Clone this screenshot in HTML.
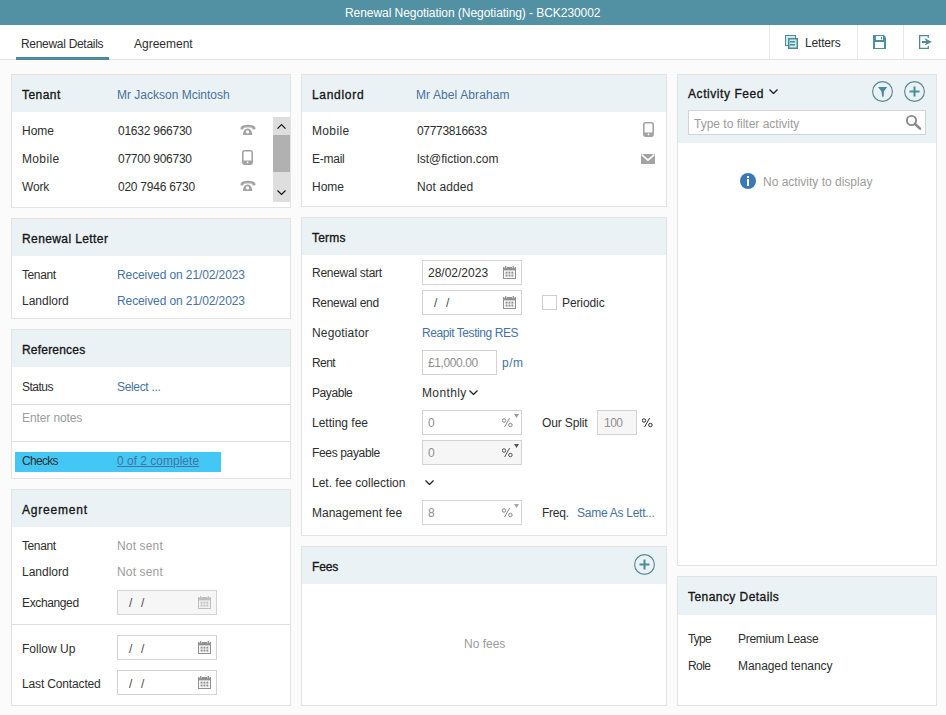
<!DOCTYPE html>
<html><head><meta charset="utf-8">
<style>
*{box-sizing:border-box;margin:0;padding:0}
html,body{width:946px;height:715px;overflow:hidden;background:#fbfbfb;font-family:"Liberation Sans",sans-serif;font-size:12px;color:#2e2e2e}
.a{position:absolute;display:block}
.t{position:absolute;white-space:nowrap;line-height:14px;font-size:12px}
.b{color:#161616;-webkit-text-stroke:0.32px #161616}
.lk{color:#4673a0}
.g{color:#9c9c9c}
.ig{color:#8f8f8f}
.p{position:absolute;background:#fff;border:1px solid #e1e3e4}
.h{position:absolute;left:0;top:0;right:0;background:#ebf2f5}
.inp{position:absolute;border:1px solid #d3d3d3;background:#fff}
.dis{background:#f6f6f6}
</style></head><body>
<div class="a" style="left:0px;top:0px;width:946px;height:25px;background:#5291a3"></div>
<div class="t " style="left:345px;top:6px;letter-spacing:-0.06px;color:#fff">Renewal Negotiation (Negotiating) - BCK230002</div>
<div class="a" style="left:0px;top:25px;width:946px;height:35px;background:#fff;border-bottom:1px solid #e3e3e3"></div>
<div class="t " style="left:21px;top:37px;letter-spacing:-0.3px;">Renewal Details</div>
<div class="t " style="left:134px;top:37px;">Agreement</div>
<div class="a" style="left:16px;top:57px;width:93px;height:3px;background:#4f8a9a"></div>
<div class="a" style="left:769px;top:25px;width:1px;height:34px;background:#e8e8e8"></div>
<div class="a" style="left:857px;top:25px;width:1px;height:34px;background:#e8e8e8"></div>
<div class="a" style="left:903px;top:25px;width:1px;height:34px;background:#e8e8e8"></div>
<div class="t " style="left:805px;top:36px;letter-spacing:-0.17px;">Letters</div>
<svg class="a" style="left:780px;top:30px" width="24" height="24" viewBox="0 0 24 24"><rect x="5.5" y="5.5" width="10" height="10" fill="#c9eef5" stroke="#508993"/><rect x="8.75" y="8.75" width="8.5" height="9.5" fill="#c9eef5" stroke="#508993" stroke-width="1.5"/><rect x="10" y="11" width="5" height="1.5" fill="#508993"/><rect x="10" y="14" width="5" height="1.5" fill="#508993"/></svg>
<svg class="a" style="left:868px;top:30px" width="24" height="24" viewBox="0 0 24 24"><path d="M5,5 L16,5 L18,7.5 L18,19 L5,19 Z" fill="#4f8d98"/><rect x="8" y="6" width="7" height="4" fill="#f4fdff"/><rect x="13" y="6.8" width="1" height="2.4" fill="#4f8d98"/><rect x="7" y="12" width="9" height="6" fill="#f4fdff"/></svg>
<svg class="a" style="left:914px;top:30px" width="24" height="24" viewBox="0 0 24 24"><path d="M14.3,7.8 L14.3,5.6 L5.6,5.6 L5.6,18.4 L14.3,18.4 L14.3,16" fill="none" stroke="#508993" stroke-width="1.3"/><rect x="8" y="11" width="5" height="2" fill="#4f8d98"/><path d="M10.5,8 L18,11.9 L10.5,15.6 L12.6,11.9 Z" fill="#4f8d98"/></svg>
<div class="p" style="left:11px;top:74px;width:280px;height:134px"><div class="h" style="height:37px"></div></div>
<div class="t b" style="left:22px;top:88px;letter-spacing:0.45px;">Tenant</div>
<div class="t lk" style="left:117px;top:88px;">Mr Jackson Mcintosh</div>
<div class="t " style="left:22px;top:124px;">Home</div>
<div class="t " style="left:118px;top:124px;letter-spacing:-0.25px;">01632 966730</div>
<div class="t " style="left:22px;top:152px;letter-spacing:0.35px;">Mobile</div>
<div class="t " style="left:118px;top:152px;letter-spacing:-0.25px;">07700 906730</div>
<div class="t " style="left:22px;top:180px;letter-spacing:-0.2px;">Work</div>
<div class="t " style="left:118px;top:180px;letter-spacing:-0.25px;">020 7946 6730</div>
<svg class="a" style="left:240px;top:124px" width="16" height="11" viewBox="0 0 16 11"><path d="M0.6,5.2 C0.2,3.6 1.2,2.2 3,1.6 C6.2,0.5 9.8,0.5 13,1.6 C14.8,2.2 15.8,3.6 15.4,5.2 L12.6,5.4 L12.2,3.8 C9.6,3.1 6.4,3.1 3.8,3.8 L3.4,5.4 Z" fill="#a3a3a3"/><path d="M3,11 C3,7.4 5,4.6 7.6,4.6 C10.2,4.6 12.2,7.4 12.2,11 Z" fill="#a3a3a3"/><circle cx="7.6" cy="7.9" r="1.6" fill="#fff"/></svg>
<svg class="a" style="left:240px;top:180px" width="16" height="11" viewBox="0 0 16 11"><path d="M0.6,5.2 C0.2,3.6 1.2,2.2 3,1.6 C6.2,0.5 9.8,0.5 13,1.6 C14.8,2.2 15.8,3.6 15.4,5.2 L12.6,5.4 L12.2,3.8 C9.6,3.1 6.4,3.1 3.8,3.8 L3.4,5.4 Z" fill="#a3a3a3"/><path d="M3,11 C3,7.4 5,4.6 7.6,4.6 C10.2,4.6 12.2,7.4 12.2,11 Z" fill="#a3a3a3"/><circle cx="7.6" cy="7.9" r="1.6" fill="#fff"/></svg>
<svg class="a" style="left:242px;top:150px" width="11" height="15" viewBox="0 0 11 15"><rect x="0.8" y="0.8" width="9.4" height="13.4" rx="1.6" fill="none" stroke="#a3a3a3" stroke-width="1.6"/><rect x="1" y="10.5" width="9" height="3.5" fill="#a3a3a3"/><circle cx="5.5" cy="12.3" r="0.9" fill="#fff"/></svg>
<div class="a" style="left:273px;top:117px;width:17px;height:85px;background:#dedede"></div>
<div class="a" style="left:273px;top:135px;width:17px;height:37px;background:#b1b1b1"></div>
<svg class="a" style="left:277px;top:124px" width="9" height="5" viewBox="0 0 9 5"><path d="M0.5,4.7 L4.5,0.6 L8.5,4.7" fill="none" stroke="#111" stroke-width="1.1"/></svg>
<svg class="a" style="left:277px;top:190px" width="9" height="5" viewBox="0 0 9 5"><path d="M0.5,0.5 L4.5,4.5 L8.5,0.5" fill="none" stroke="#111" stroke-width="1.1"/></svg>
<div class="p" style="left:11px;top:218px;width:280px;height:101px"><div class="h" style="height:37px"></div></div>
<div class="t b" style="left:22px;top:232px;letter-spacing:0.4px;">Renewal Letter</div>
<div class="t " style="left:22px;top:268px;letter-spacing:-0.4px;">Tenant</div>
<div class="t lk" style="left:117px;top:268px;letter-spacing:-0.1px;">Received on 21/02/2023</div>
<div class="t " style="left:22px;top:294px;">Landlord</div>
<div class="t lk" style="left:117px;top:294px;letter-spacing:-0.1px;">Received on 21/02/2023</div>
<div class="p" style="left:11px;top:329px;width:280px;height:150px"><div class="h" style="height:37px"></div></div>
<div class="t b" style="left:22px;top:343px;letter-spacing:0.2px;">References</div>
<div class="t " style="left:22px;top:380px;letter-spacing:-0.5px;">Status</div>
<div class="t lk" style="left:117px;top:380px;letter-spacing:-0.33px;">Select ...</div>
<div class="a" style="left:12px;top:404px;width:278px;height:1px;background:#dedede"></div>
<div class="t g" style="left:22px;top:411px;letter-spacing:-0.1px;">Enter notes</div>
<div class="a" style="left:12px;top:441px;width:278px;height:1px;background:#dedede"></div>
<div class="a" style="left:15px;top:452px;width:206px;height:20px;background:#43c7f5"></div>
<div class="t " style="left:22px;top:454px;letter-spacing:-0.7px;">Checks</div>
<div class="t lk" style="left:117px;top:454px;text-decoration:underline">0 of 2 complete</div>
<div class="p" style="left:11px;top:489px;width:280px;height:217px"><div class="h" style="height:37px"></div></div>
<div class="t b" style="left:22px;top:503px;letter-spacing:0.8px;">Agreement</div>
<div class="t " style="left:22px;top:539px;letter-spacing:-0.4px;">Tenant</div>
<div class="t g" style="left:117px;top:539px;letter-spacing:0.15px;">Not sent</div>
<div class="t " style="left:22px;top:565px;">Landlord</div>
<div class="t g" style="left:117px;top:565px;letter-spacing:0.15px;">Not sent</div>
<div class="inp dis" style="left:117px;top:590px;width:100px;height:25px"></div>
<div class="t " style="left:22px;top:596px;letter-spacing:-0.37px;">Exchanged</div>
<div class="t " style="left:129px;top:596px;color:#4a4a4a">/</div>
<div class="t " style="left:141px;top:596px;color:#4a4a4a">/</div>
<svg class="a" style="left:198px;top:596px" width="13" height="13" viewBox="0 0 13 13"><rect x="0.5" y="1.5" width="12" height="11" fill="none" stroke="#bdbdbd"/><rect x="0" y="1" width="13" height="3.4" fill="#bdbdbd"/><rect x="1.4" y="0" width="2.6" height="2.2" fill="#f6f6f6"/><rect x="9" y="0" width="2.6" height="2.2" fill="#f6f6f6"/><rect x="2.1" y="0" width="1.3" height="3" fill="#bdbdbd"/><rect x="9.6" y="0" width="1.3" height="3" fill="#bdbdbd"/><path d="M1,7.2 H12 M1,10 H12 M4.2,5 V12 M7,5 V12 M9.8,5 V12" stroke="#bdbdbd" stroke-width="0.6" opacity="0.35"/><rect x="2.6" y="5.7" width="1.8" height="1.8" fill="#bdbdbd"/><rect x="2.6" y="8.6" width="1.8" height="1.8" fill="#bdbdbd"/><rect x="5.5" y="5.7" width="1.8" height="1.8" fill="#bdbdbd"/><rect x="5.5" y="8.6" width="1.8" height="1.8" fill="#bdbdbd"/><rect x="8.4" y="5.7" width="1.8" height="1.8" fill="#bdbdbd"/><rect x="8.4" y="8.6" width="1.8" height="1.8" fill="#bdbdbd"/></svg>
<div class="a" style="left:12px;top:624px;width:278px;height:1px;background:#dedede"></div>
<div class="inp" style="left:117px;top:635px;width:100px;height:25px"></div>
<div class="t " style="left:22px;top:642px;">Follow Up</div>
<div class="t " style="left:129px;top:642px;color:#4a4a4a">/</div>
<div class="t " style="left:141px;top:642px;color:#4a4a4a">/</div>
<svg class="a" style="left:198px;top:641px" width="13" height="13" viewBox="0 0 13 13"><rect x="0.5" y="1.5" width="12" height="11" fill="none" stroke="#909090"/><rect x="0" y="1" width="13" height="3.4" fill="#909090"/><rect x="1.4" y="0" width="2.6" height="2.2" fill="#fff"/><rect x="9" y="0" width="2.6" height="2.2" fill="#fff"/><rect x="2.1" y="0" width="1.3" height="3" fill="#909090"/><rect x="9.6" y="0" width="1.3" height="3" fill="#909090"/><path d="M1,7.2 H12 M1,10 H12 M4.2,5 V12 M7,5 V12 M9.8,5 V12" stroke="#909090" stroke-width="0.6" opacity="0.35"/><rect x="2.6" y="5.7" width="1.8" height="1.8" fill="#909090"/><rect x="2.6" y="8.6" width="1.8" height="1.8" fill="#909090"/><rect x="5.5" y="5.7" width="1.8" height="1.8" fill="#909090"/><rect x="5.5" y="8.6" width="1.8" height="1.8" fill="#909090"/><rect x="8.4" y="5.7" width="1.8" height="1.8" fill="#909090"/><rect x="8.4" y="8.6" width="1.8" height="1.8" fill="#909090"/></svg>
<div class="inp" style="left:117px;top:670px;width:100px;height:25px"></div>
<div class="t " style="left:22px;top:677px;letter-spacing:-0.15px;">Last Contacted</div>
<div class="t " style="left:129px;top:677px;color:#4a4a4a">/</div>
<div class="t " style="left:141px;top:677px;color:#4a4a4a">/</div>
<svg class="a" style="left:198px;top:676px" width="13" height="13" viewBox="0 0 13 13"><rect x="0.5" y="1.5" width="12" height="11" fill="none" stroke="#909090"/><rect x="0" y="1" width="13" height="3.4" fill="#909090"/><rect x="1.4" y="0" width="2.6" height="2.2" fill="#fff"/><rect x="9" y="0" width="2.6" height="2.2" fill="#fff"/><rect x="2.1" y="0" width="1.3" height="3" fill="#909090"/><rect x="9.6" y="0" width="1.3" height="3" fill="#909090"/><path d="M1,7.2 H12 M1,10 H12 M4.2,5 V12 M7,5 V12 M9.8,5 V12" stroke="#909090" stroke-width="0.6" opacity="0.35"/><rect x="2.6" y="5.7" width="1.8" height="1.8" fill="#909090"/><rect x="2.6" y="8.6" width="1.8" height="1.8" fill="#909090"/><rect x="5.5" y="5.7" width="1.8" height="1.8" fill="#909090"/><rect x="5.5" y="8.6" width="1.8" height="1.8" fill="#909090"/><rect x="8.4" y="5.7" width="1.8" height="1.8" fill="#909090"/><rect x="8.4" y="8.6" width="1.8" height="1.8" fill="#909090"/></svg>
<div class="p" style="left:301px;top:74px;width:366px;height:133px"><div class="h" style="height:37px"></div></div>
<div class="t b" style="left:312px;top:88px;letter-spacing:0.7px;">Landlord</div>
<div class="t lk" style="left:416px;top:88px;letter-spacing:0.1px;">Mr Abel Abraham</div>
<div class="t " style="left:312px;top:124px;letter-spacing:0.35px;">Mobile</div>
<div class="t " style="left:417px;top:124px;letter-spacing:-0.33px;">07773816633</div>
<div class="t " style="left:312px;top:152px;letter-spacing:-0.25px;">E-mail</div>
<div class="t " style="left:417px;top:152px;">lst@fiction.com</div>
<div class="t " style="left:312px;top:180px;">Home</div>
<div class="t " style="left:417px;top:180px;letter-spacing:0.1px;">Not added</div>
<svg class="a" style="left:643px;top:122px" width="11" height="15" viewBox="0 0 11 15"><rect x="0.8" y="0.8" width="9.4" height="13.4" rx="1.6" fill="none" stroke="#a3a3a3" stroke-width="1.6"/><rect x="1" y="10.5" width="9" height="3.5" fill="#a3a3a3"/><circle cx="5.5" cy="12.3" r="0.9" fill="#fff"/></svg>
<svg class="a" style="left:641px;top:154px" width="14" height="10" viewBox="0 0 14 10"><rect x="0" y="0" width="14" height="10" fill="#a3a3a3"/><path d="M0.6,0.6 L7,6.2 L13.4,0.6" fill="none" stroke="#fff" stroke-width="1.6"/></svg>
<div class="p" style="left:301px;top:217px;width:366px;height:319px"><div class="h" style="height:37px"></div></div>
<div class="t b" style="left:312px;top:231px;letter-spacing:0.2px;">Terms</div>
<div class="t " style="left:312px;top:266px;letter-spacing:-0.27px;">Renewal start</div>
<div class="t " style="left:312px;top:296px;letter-spacing:-0.3px;">Renewal end</div>
<div class="t " style="left:312px;top:326px;letter-spacing:0.15px;">Negotiator</div>
<div class="t " style="left:312px;top:356px;letter-spacing:-0.6px;">Rent</div>
<div class="t " style="left:312px;top:386px;letter-spacing:-0.43px;">Payable</div>
<div class="t " style="left:312px;top:416px;">Letting fee</div>
<div class="t " style="left:312px;top:446px;letter-spacing:-0.35px;">Fees payable</div>
<div class="t " style="left:312px;top:476px;">Let. fee collection</div>
<div class="t " style="left:312px;top:506px;">Management fee</div>
<div class="inp" style="left:422px;top:260px;width:100px;height:25px"></div>
<div class="t " style="left:428px;top:266px;">28/02/2023</div>
<svg class="a" style="left:503px;top:266px" width="13" height="13" viewBox="0 0 13 13"><rect x="0.5" y="1.5" width="12" height="11" fill="none" stroke="#909090"/><rect x="0" y="1" width="13" height="3.4" fill="#909090"/><rect x="1.4" y="0" width="2.6" height="2.2" fill="#fff"/><rect x="9" y="0" width="2.6" height="2.2" fill="#fff"/><rect x="2.1" y="0" width="1.3" height="3" fill="#909090"/><rect x="9.6" y="0" width="1.3" height="3" fill="#909090"/><path d="M1,7.2 H12 M1,10 H12 M4.2,5 V12 M7,5 V12 M9.8,5 V12" stroke="#909090" stroke-width="0.6" opacity="0.35"/><rect x="2.6" y="5.7" width="1.8" height="1.8" fill="#909090"/><rect x="2.6" y="8.6" width="1.8" height="1.8" fill="#909090"/><rect x="5.5" y="5.7" width="1.8" height="1.8" fill="#909090"/><rect x="5.5" y="8.6" width="1.8" height="1.8" fill="#909090"/><rect x="8.4" y="5.7" width="1.8" height="1.8" fill="#909090"/><rect x="8.4" y="8.6" width="1.8" height="1.8" fill="#909090"/></svg>
<div class="inp" style="left:422px;top:290px;width:100px;height:25px"></div>
<div class="t " style="left:434px;top:296px;color:#4a4a4a">/</div>
<div class="t " style="left:446px;top:296px;color:#4a4a4a">/</div>
<svg class="a" style="left:503px;top:296px" width="13" height="13" viewBox="0 0 13 13"><rect x="0.5" y="1.5" width="12" height="11" fill="none" stroke="#909090"/><rect x="0" y="1" width="13" height="3.4" fill="#909090"/><rect x="1.4" y="0" width="2.6" height="2.2" fill="#fff"/><rect x="9" y="0" width="2.6" height="2.2" fill="#fff"/><rect x="2.1" y="0" width="1.3" height="3" fill="#909090"/><rect x="9.6" y="0" width="1.3" height="3" fill="#909090"/><path d="M1,7.2 H12 M1,10 H12 M4.2,5 V12 M7,5 V12 M9.8,5 V12" stroke="#909090" stroke-width="0.6" opacity="0.35"/><rect x="2.6" y="5.7" width="1.8" height="1.8" fill="#909090"/><rect x="2.6" y="8.6" width="1.8" height="1.8" fill="#909090"/><rect x="5.5" y="5.7" width="1.8" height="1.8" fill="#909090"/><rect x="5.5" y="8.6" width="1.8" height="1.8" fill="#909090"/><rect x="8.4" y="5.7" width="1.8" height="1.8" fill="#909090"/><rect x="8.4" y="8.6" width="1.8" height="1.8" fill="#909090"/></svg>
<div class="a" style="left:542px;top:295px;width:15px;height:15px;border:1px solid #cfcfcf;background:#fff"></div>
<div class="t " style="left:562px;top:296px;letter-spacing:-0.1px;">Periodic</div>
<div class="t lk" style="left:422px;top:326px;letter-spacing:-0.43px;">Reapit Testing RES</div>
<div class="inp" style="left:422px;top:350px;width:75px;height:25px"></div>
<div class="t ig" style="left:428px;top:356px;letter-spacing:-0.41px;">£1,000.00</div>
<div class="t lk" style="left:502px;top:356px;letter-spacing:0.5px;">p/m</div>
<div class="t " style="left:422px;top:386px;letter-spacing:0.37px;">Monthly</div>
<svg class="a" style="left:469px;top:390px" width="9" height="5" viewBox="0 0 9 5"><path d="M0.5,0.5 L4.5,4.5 L8.5,0.5" fill="none" stroke="#222" stroke-width="1.3"/></svg>
<div class="inp" style="left:422px;top:410px;width:100px;height:25px"></div>
<div class="t ig" style="left:428px;top:416px;">0</div>
<svg class="a" style="left:502px;top:418px" width="11" height="10" viewBox="0 0 11 10"><circle cx="2" cy="2.5" r="1.75" fill="none" stroke="#858585" stroke-width="1"/><circle cx="8.4" cy="7" r="1.75" fill="none" stroke="#858585" stroke-width="1"/><path d="M2.6,9 L7.6,0.1" stroke="#858585" stroke-width="1"/></svg>
<svg class="a" style="left:514px;top:414px" width="5" height="4" viewBox="0 0 5 4"><path d="M0,0 L5,0 L2.5,4 Z" fill="#9a9a9a"/></svg>
<div class="t " style="left:542px;top:416px;letter-spacing:-0.14px;">Our Split</div>
<div class="inp dis" style="left:597px;top:410px;width:40px;height:25px"></div>
<div class="t ig" style="left:604px;top:416px;letter-spacing:-0.5px;">100</div>
<svg class="a" style="left:642px;top:418px" width="11" height="10" viewBox="0 0 11 10"><circle cx="2" cy="2.5" r="1.75" fill="none" stroke="#2a2a2a" stroke-width="1"/><circle cx="8.4" cy="7" r="1.75" fill="none" stroke="#2a2a2a" stroke-width="1"/><path d="M2.6,9 L7.6,0.1" stroke="#2a2a2a" stroke-width="1"/></svg>
<div class="inp dis" style="left:422px;top:440px;width:100px;height:25px"></div>
<div class="t ig" style="left:428px;top:446px;">0</div>
<svg class="a" style="left:502px;top:448px" width="11" height="10" viewBox="0 0 11 10"><circle cx="2" cy="2.5" r="1.75" fill="none" stroke="#505050" stroke-width="1"/><circle cx="8.4" cy="7" r="1.75" fill="none" stroke="#505050" stroke-width="1"/><path d="M2.6,9 L7.6,0.1" stroke="#505050" stroke-width="1"/></svg>
<svg class="a" style="left:514px;top:444px" width="5" height="4" viewBox="0 0 5 4"><path d="M0,0 L5,0 L2.5,4 Z" fill="#555"/></svg>
<svg class="a" style="left:425px;top:480px" width="9" height="5" viewBox="0 0 9 5"><path d="M0.5,0.5 L4.5,4.5 L8.5,0.5" fill="none" stroke="#222" stroke-width="1.3"/></svg>
<div class="inp" style="left:422px;top:500px;width:100px;height:25px"></div>
<div class="t ig" style="left:428px;top:506px;">8</div>
<svg class="a" style="left:502px;top:508px" width="11" height="10" viewBox="0 0 11 10"><circle cx="2" cy="2.5" r="1.75" fill="none" stroke="#858585" stroke-width="1"/><circle cx="8.4" cy="7" r="1.75" fill="none" stroke="#858585" stroke-width="1"/><path d="M2.6,9 L7.6,0.1" stroke="#858585" stroke-width="1"/></svg>
<svg class="a" style="left:514px;top:504px" width="5" height="4" viewBox="0 0 5 4"><path d="M0,0 L5,0 L2.5,4 Z" fill="#a5a5a5"/></svg>
<div class="t " style="left:542px;top:506px;letter-spacing:-0.25px;">Freq.</div>
<div class="t lk" style="left:577px;top:506px;letter-spacing:-0.26px;">Same As Lett...</div>
<div class="p" style="left:301px;top:546px;width:366px;height:160px"><div class="h" style="height:37px"></div></div>
<div class="t b" style="left:312px;top:560px;letter-spacing:-0.15px;">Fees</div>
<svg class="a" style="left:634px;top:554px" width="21" height="21" viewBox="0 0 21 21"><circle cx="10.5" cy="10.5" r="9.9" fill="none" stroke="#588a93" stroke-width="1.15"/><rect x="5.5" y="9.5" width="10" height="2" fill="#4b8c99"/><rect x="9.5" y="5.5" width="2" height="10" fill="#4b8c99"/></svg>
<div class="t g" style="left:464px;top:637px;">No fees</div>
<div class="p" style="left:677px;top:74px;width:260px;height:492px"><div class="h" style="height:68px"></div></div>
<div class="t b" style="left:688px;top:87px;letter-spacing:0.57px;">Activity Feed</div>
<svg class="a" style="left:769px;top:89px" width="9" height="5" viewBox="0 0 9 5"><path d="M0.5,0.5 L4.5,4.5 L8.5,0.5" fill="none" stroke="#222" stroke-width="1.4"/></svg>
<svg class="a" style="left:872px;top:81px" width="21" height="21" viewBox="0 0 21 21"><circle cx="10.5" cy="10.5" r="9.9" fill="none" stroke="#588a93" stroke-width="1.15"/><path d="M6,6 L15.2,6 L12,10.3 L11.6,15.8 L10.2,15.8 L9.4,10.3 Z" fill="#4b8c99"/></svg>
<svg class="a" style="left:904px;top:81px" width="21" height="21" viewBox="0 0 21 21"><circle cx="10.5" cy="10.5" r="9.9" fill="none" stroke="#588a93" stroke-width="1.15"/><rect x="5.5" y="9.5" width="10" height="2" fill="#4b8c99"/><rect x="9.5" y="5.5" width="2" height="10" fill="#4b8c99"/></svg>
<div class="inp" style="left:688px;top:110px;width:238px;height:25px"></div>
<div class="t g" style="left:694px;top:117px;">Type to filter activity</div>
<svg class="a" style="left:902px;top:111px" width="24" height="24" viewBox="0 0 24 24"><circle cx="9.5" cy="9.5" r="4.6" fill="none" stroke="#8a8a8a" stroke-width="1.9"/><path d="M13,13 L18,17.6" stroke="#8a8a8a" stroke-width="2.6" stroke-linecap="round"/></svg>
<svg class="a" style="left:740px;top:173px" width="16" height="16" viewBox="0 0 16 16"><circle cx="8" cy="8" r="8" fill="#3b78b6"/><rect x="7" y="3" width="2" height="2" fill="#fff"/><rect x="7" y="6" width="2" height="7" fill="#fff"/></svg>
<div class="t g" style="left:763px;top:175px;">No activity to display</div>
<div class="p" style="left:677px;top:576px;width:260px;height:130px"><div class="h" style="height:38px"></div></div>
<div class="t b" style="left:688px;top:590px;letter-spacing:0.44px;">Tenancy Details</div>
<div class="t " style="left:688px;top:632px;letter-spacing:-0.8px;">Type</div>
<div class="t " style="left:738px;top:632px;letter-spacing:-0.29px;">Premium Lease</div>
<div class="t " style="left:688px;top:659px;letter-spacing:-0.6px;">Role</div>
<div class="t " style="left:738px;top:659px;letter-spacing:-0.07px;">Managed tenancy</div>
</body></html>
